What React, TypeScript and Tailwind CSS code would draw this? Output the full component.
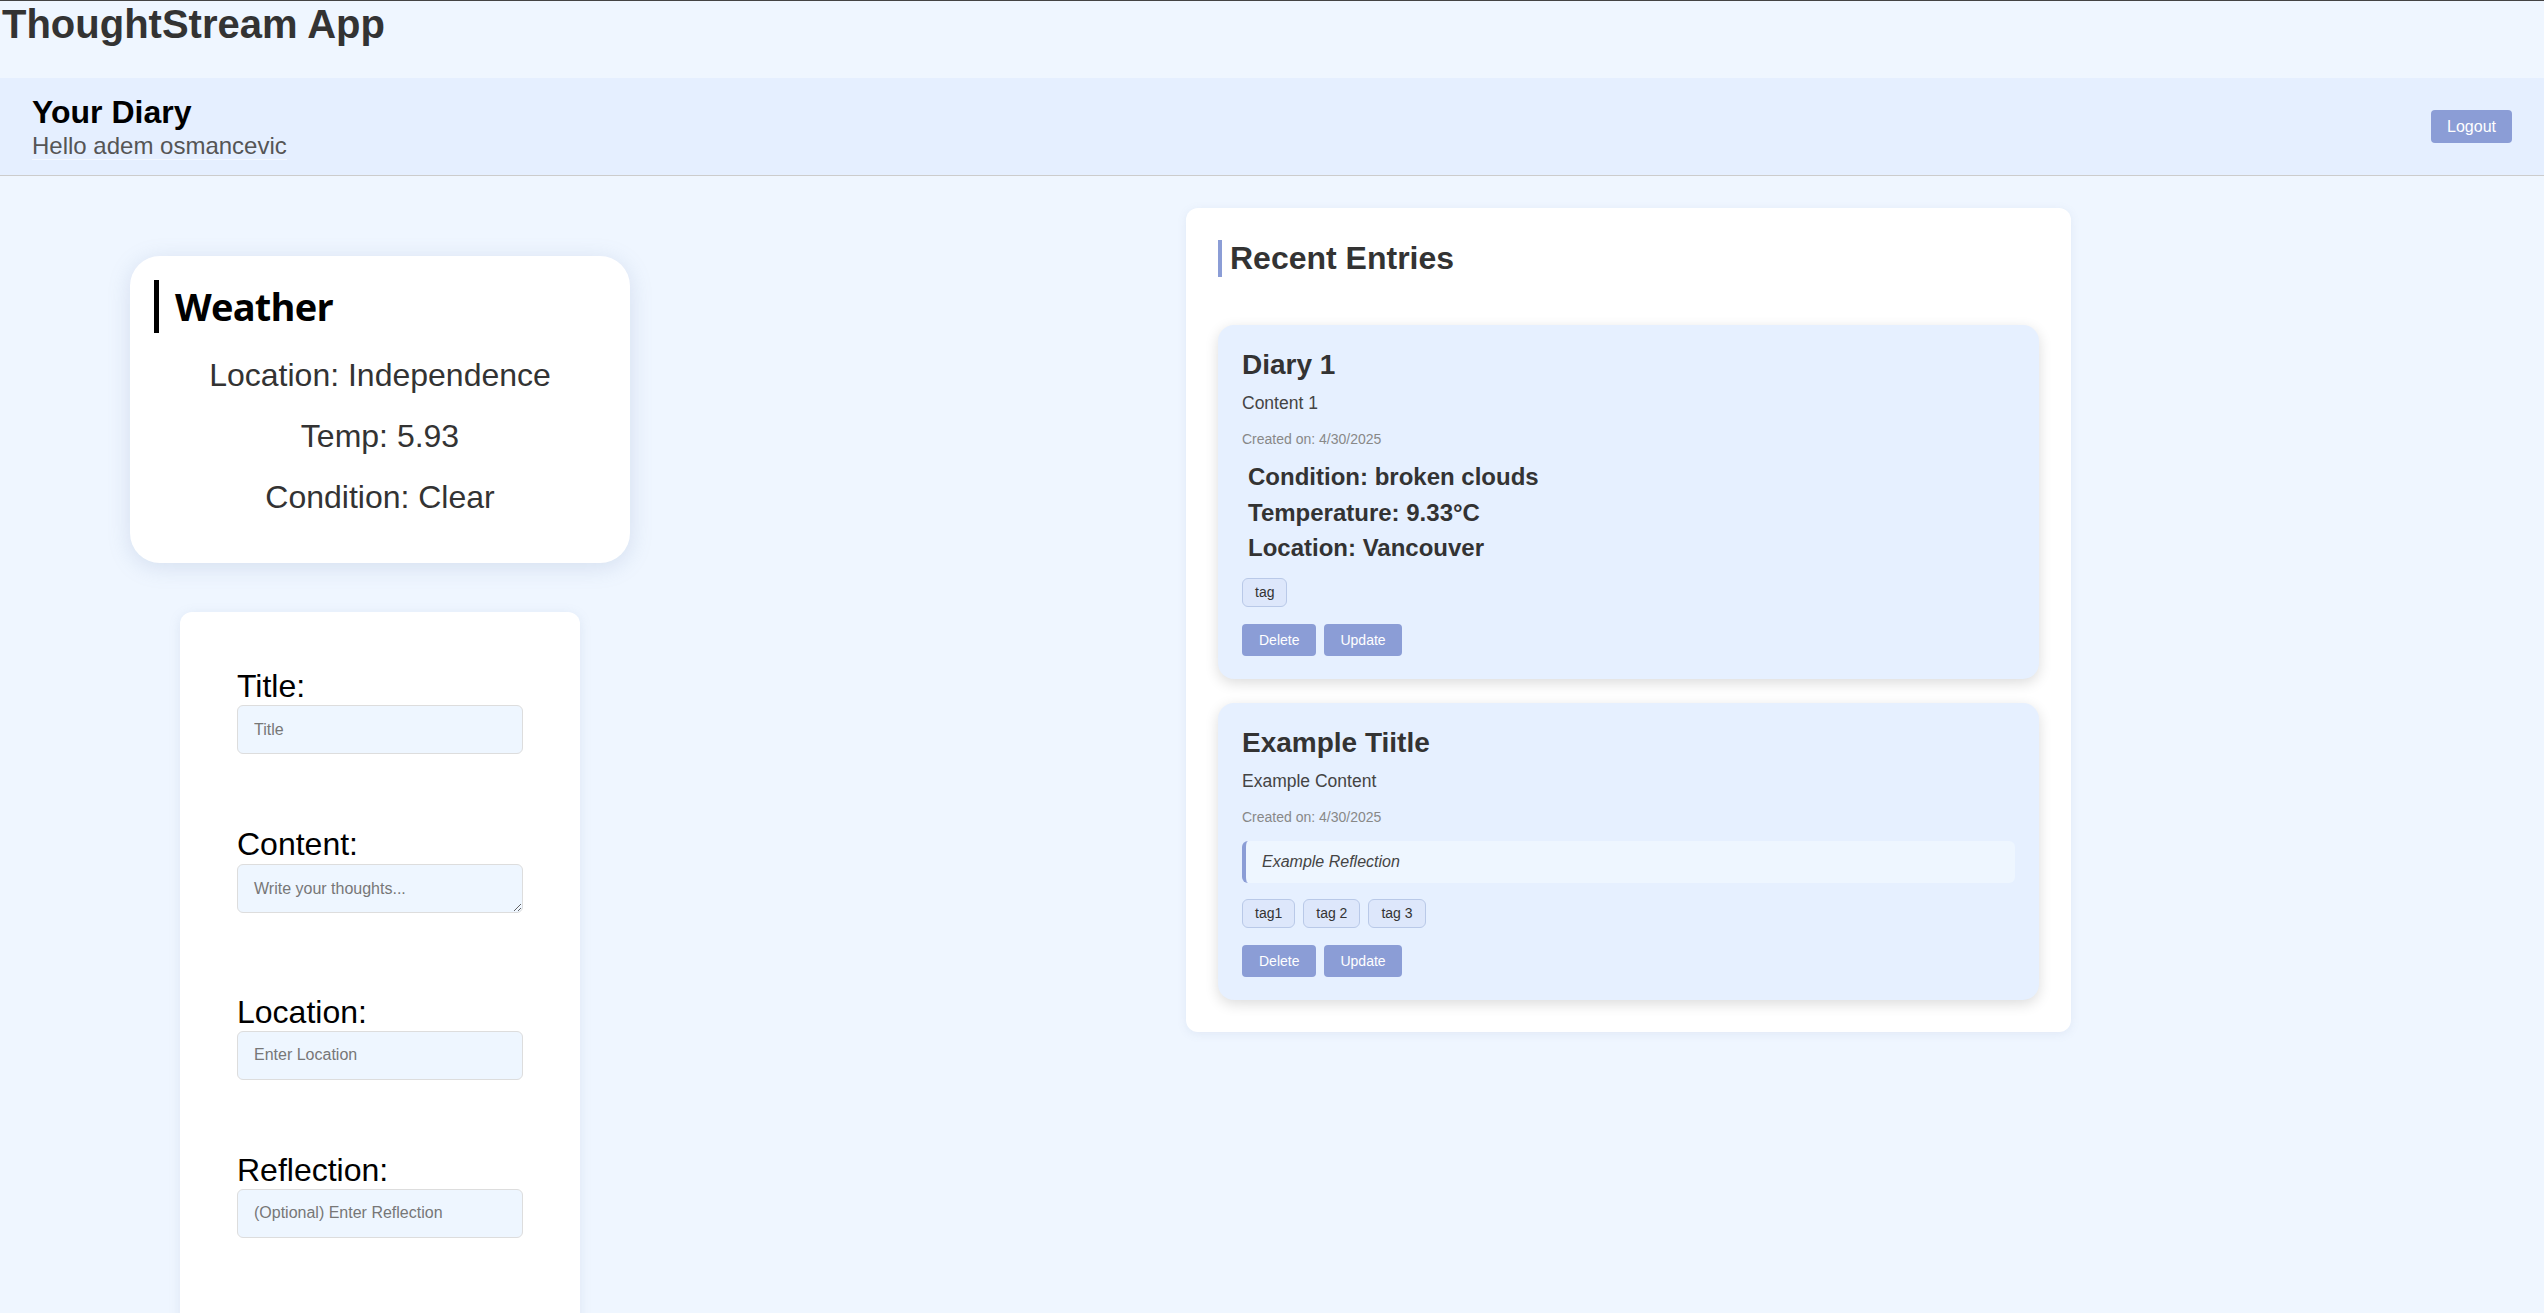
const entries = [
  {
    title: "Diary 1",
    content: "Content 1",
    created: "4/30/2025",
    weather: { condition: "broken clouds", temp: "9.33°C", location: "Vancouver" },
    tags: ["tag"],
  },
  {
    title: "Example Tiitle",
    content: "Example Content",
    created: "4/30/2025",
    reflection: "Example Reflection",
    tags: ["tag1", "tag 2", "tag 3"],
  },
]

const fields = [
  { label: "Title:", placeholder: "Title" },
  { label: "Content:", placeholder: "Write your thoughts...", multiline: true },
  { label: "Location:", placeholder: "Enter Location" },
  { label: "Reflection:", placeholder: "(Optional) Enter Reflection" },
]

function WeatherCard() {
  return (
    <div className="w-[500px] rounded-[30px] bg-white px-6 pt-6 pb-12 shadow-[0_4px_22px_rgba(120,140,180,0.22)]">
      <h2 className="border-l-[5px] border-black pl-4 font-['Open_Sans',sans-serif] text-[38px] font-bold leading-[53px] tracking-[-0.02em] text-black">
        Weather
      </h2>
      <div className="mt-6 flex flex-col gap-6 text-center text-[32px] leading-[1.15] text-[#333]">
        <p>Location: Independence</p>
        <p>Temp: 5.93</p>
        <p>Condition: Clear</p>
      </div>
    </div>
  )
}

function DiaryForm() {
  return (
    <form className="mt-[49px] w-[400px] rounded-xl bg-white px-[57px] pt-[56px] pb-[140px] shadow-[0_2px_12px_rgba(120,140,180,0.15)]">
      {fields.map((f) => (
        <div key={f.label} className={f.multiline ? "mb-[81px]" : "mb-[72px]"}>
          <label className="block text-[32px] leading-[1.15] text-black">{f.label}</label>
          {f.multiline ? (
            <textarea
              rows={1}
              placeholder={f.placeholder}
              className="mt-px block h-[49px] w-full rounded-md border border-[#ddd] bg-[#eef6ff] px-4 py-[14px] text-base leading-[19px] placeholder:text-[#777]"
            />
          ) : (
            <input
              placeholder={f.placeholder}
              className="block h-[49px] w-full rounded-md border border-[#ddd] bg-[#eef6ff] px-4 py-[14px] text-base leading-[19px] placeholder:text-[#777]"
            />
          )}
        </div>
      ))}
    </form>
  )
}

function EntryCard({ entry }: { entry: (typeof entries)[number] }) {
  return (
    <div className="rounded-2xl bg-[#e6f0ff] px-6 pt-6 pb-[23px] shadow-[0_4px_14px_rgba(0,0,0,0.14)]">
      <h3 className="text-[28px] font-bold leading-[1.15] text-[#333]">{entry.title}</h3>
      <p className="mt-3 text-[17.5px] leading-[20px] text-[#444]">{entry.content}</p>
      <p className="mt-[18px] text-sm leading-[16px] text-[#888]">Created on: {entry.created}</p>
      {entry.weather && (
        <div className="mt-4 ml-1.5 flex flex-col gap-2 text-2xl font-bold leading-[1.15] text-[#333]">
          <p>Condition: {entry.weather.condition}</p>
          <p>Temperature: {entry.weather.temp}</p>
          <p>Location: {entry.weather.location}</p>
        </div>
      )}
      {entry.reflection && (
        <div className="mt-4 rounded-md border-l-4 border-[#8b9dd6] bg-[#eef6ff] px-4 py-3 text-base italic leading-[18px] text-[#444]">
          {entry.reflection}
        </div>
      )}
      <div className="mt-4 flex gap-2">
        {entry.tags.map((t) => (
          <span
            key={t}
            className="rounded-md border border-[#b9c9e8] bg-[#dde7fb] px-3 py-[5px] text-sm leading-[17px] text-[#333]"
          >
            {t}
          </span>
        ))}
      </div>
      <div className="mt-[17px] flex gap-2">
        <button className="rounded bg-[#8b9dd6] px-[17px] py-2 text-sm leading-4 text-white">Delete</button>
        <button className="rounded bg-[#8b9dd6] px-4 py-2 text-sm leading-4 text-white">Update</button>
      </div>
    </div>
  )
}

export default function App() {
  return (
    <div className="min-h-screen border-t border-[#444] bg-[#eff6ff] font-['Liberation_Sans',Arial,sans-serif]">
      <h1 className="mb-[30px] pl-0.5 text-[40px] font-bold leading-[47px] text-[#333]">ThoughtStream App</h1>

      <nav className="flex items-center justify-between border-b border-[#ccc] bg-[#e5efff] px-8 py-[15px]">
        <div>
          <h2 className="text-[32px] font-bold leading-[38px] text-black">Your Diary</h2>
          <p className="text-2xl leading-[29px] text-[#555]">
            <span className="border-b border-[#f3f8ff]">Hello adem osmancevic</span>
          </p>
        </div>
        <button className="rounded bg-[#8b9dd6] px-4 py-[7px] text-base leading-[19px] text-white">Logout</button>
      </nav>

      <main className="flex items-start">
        <div className="flex w-[760px] flex-col items-center pt-20">
          <WeatherCard />
          <DiaryForm />
        </div>

        <section className="mt-8 ml-[426px] w-[885px] rounded-xl bg-white p-8 shadow-[0_2px_10px_rgba(120,140,180,0.12)]">
          <h2 className="mb-12 border-l-4 border-[#8b9dd6] pl-2 text-[32px] font-bold leading-[37px] text-[#333]">
            Recent Entries
          </h2>
          <div className="flex flex-col gap-6">
            {entries.map((e) => (
              <EntryCard key={e.title} entry={e} />
            ))}
          </div>
        </section>
      </main>
    </div>
  )
}
